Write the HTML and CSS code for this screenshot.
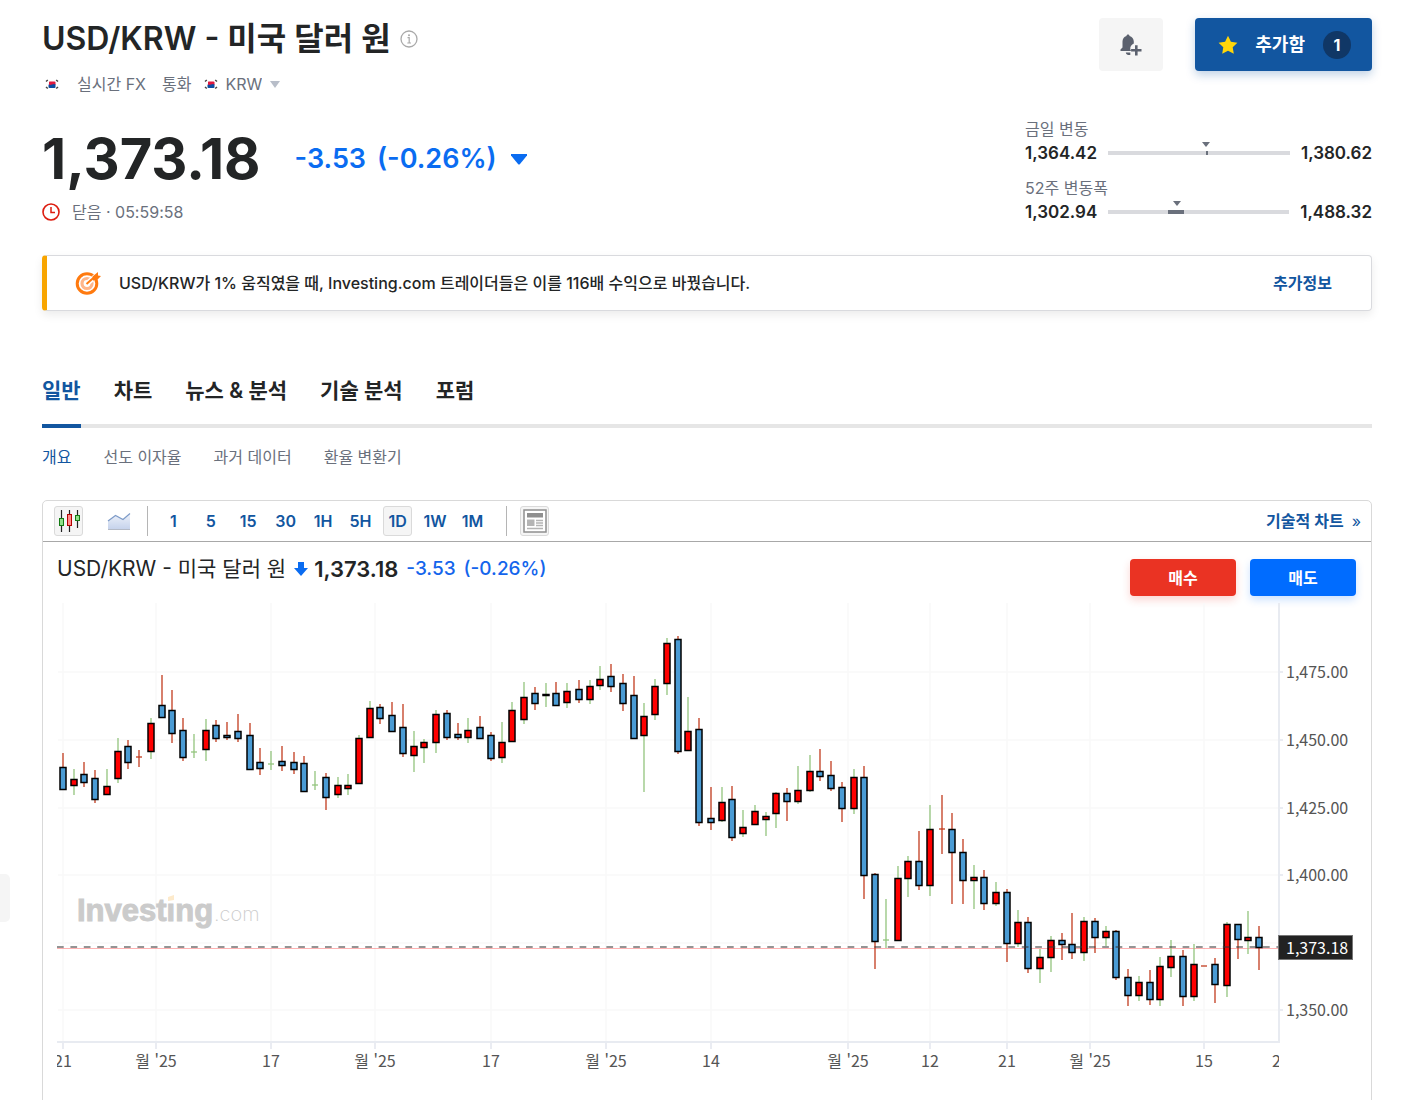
FILE: index.html
```html
<!DOCTYPE html>
<html lang="ko">
<head>
    <meta charset="UTF-8">
    <meta name="viewport" content="width=device-width, initial-scale=1.0">
    <title>USD/KRW - 미국 달러 원</title>
    <link rel="stylesheet" href="styles.css">
</head>
<body>

<svg class="defs" aria-hidden="true">
    <symbol id="flag-kr" viewBox="0 0 14 14">
        <rect width="14" height="14" fill="#fff"/>
        <path d="M4 8V5q0-.5.5-.5H9.500q1 0 1 1V8z" fill="#e0193f"/>
        <path d="M3.500 7.500q1.500.8 3.500 0 2-1 3.500 0V10q0 1-1 1H4.500q-1 0-1-1z" fill="#0b4da2"/>
        <path d="M1 4.500l1.800-1.500M11.200 3l1.800 1.500M1 10l1.800 1.500M11.200 11.500l1.800-1.500" stroke="#444" stroke-width="1.500"/>
    </symbol>
</svg>

<button class="side-tab" aria-label="open panel"></button>

<main class="page">
    <header class="quote">
        <div class="quote-left">
            <h1>USD/KRW - 미국 달러 원
                <svg class="info" viewBox="0 0 18 18"><circle cx="9" cy="9" r="8" fill="none" stroke="#a9a9a9" stroke-width="1.300"/><circle cx="9" cy="5.200" r="1" fill="#a9a9a9"/><path d="M7.500 7.700H9.200V13M7.300 13H11" fill="none" stroke="#a9a9a9" stroke-width="1.200"/></svg>
            </h1>
            <div class="crumbs">
                <svg class="flag"><use href="#flag-kr"/></svg>
                <span class="crumb-fx">실시간 FX</span>
                <label for="currency">통화</label>
                <svg class="flag"><use href="#flag-kr"/></svg>
                <select id="currency"><option>KRW</option></select>
                <svg class="caret" viewBox="0 0 10 7"><path d="M0 0h10L5 7z" fill="#b8bec9"/></svg>
            </div>
            <div class="price-row">
                <span class="price">1,373.18</span>
                <span class="change">-3.53</span>
                <span class="change">(-0.26%)</span>
                <svg class="down" viewBox="0 0 16 11"><path d="M0 0h16v1.500L9 10q-1 1-2 0L0 1.500z" fill="#0a6cf1"/></svg>
            </div>
            <div class="status">
                <svg class="clock" viewBox="0 0 18 18" fill="none" stroke="#dd1c0f"><circle cx="9" cy="9" r="8" stroke-width="1.600"/><path d="M9 4v5.500h4" stroke-width="1.500"/></svg>
                <span>닫음 · 05:59:58</span>
            </div>
        </div>

        <div class="quote-right">
            <div class="actions">
                <button class="alert" aria-label="알림">
                    <svg viewBox="0 0 22 22" fill="#5b616e"><path d="M8 0.500C8.800 0.500 9.500 1 9.500 2C12 2.800 13.800 5 13.800 7.500V9.500C11.500 10.500 10 12.500 10.300 15.200L11 17H0.500V15.500L2.500 13.500V7.500C2.500 5 4 2.800 6.500 2C6.500 1 7.200 0.500 8 0.500zM5.800 18.500H10.300V21C8 21.200 6 20.500 5.800 18.500z"/><path d="M15 11.200h2.600v3.800h3.900v2.600h-3.900v3.900H15v-3.900h-3.900V15H15z"/></svg>
                </button>
                <button class="added">
                    <svg viewBox="0 0 20 20"><path d="M10 .8l2.900 6 6.500.9-4.700 4.600 1.100 6.500L10 15.700l-5.800 3.100 1.100-6.500L.6 7.700l6.500-.9z" fill="#ffd60a"/></svg>
                    <span>추가함</span>
                    <span class="count">1</span>
                </button>
            </div>
            <div class="range">
                <span class="range-label">금일 변동</span>
                <div class="range-row">
                    <b>1,364.42</b>
                    <div class="bar"><i class="fill day"></i><i class="pin day"></i></div>
                    <b>1,380.62</b>
                </div>
            </div>
            <div class="range">
                <span class="range-label">52주 변동폭</span>
                <div class="range-row">
                    <b>1,302.94</b>
                    <div class="bar"><i class="fill year"></i><i class="pin year"></i></div>
                    <b>1,488.32</b>
                </div>
            </div>
        </div>
    </header>

    <section class="promo">
        <svg viewBox="0 0 26 24" fill="none">
            <circle cx="12" cy="12.500" r="9.800" stroke="#ff7a0f" stroke-width="3"/>
            <circle cx="12" cy="12.500" r="5" stroke="#ffb68a" stroke-width="3.200"/>
            <path d="M12 12.500L21 5" stroke="#fff" stroke-width="5"/>
            <path d="M11.500 13L20 5.500" stroke="#ff7a0f" stroke-width="2"/>
            <path d="M17.500 5.500L23 1v3.500l3 .5-4.500 4.500H18z" fill="#ff7a0f"/>
        </svg>
        <p>USD/KRW가 1% 움직였을 때, Investing.com 트레이더들은 이를 116배 수익으로 바꿨습니다.</p>
        <a href="#">추가정보</a>
    </section>

    <nav class="tabs">
        <a href="#" class="active">일반</a>
        <a href="#">차트</a>
        <a href="#">뉴스 &amp; 분석</a>
        <a href="#">기술 분석</a>
        <a href="#">포럼</a>
    </nav>
    <nav class="subtabs">
        <a href="#" class="active">개요</a>
        <a href="#">선도 이자율</a>
        <a href="#">과거 데이터</a>
        <a href="#">환율 변환기</a>
    </nav>

    <section class="chart-box">
        <div class="toolbar">
            <button class="tool active" aria-label="candles">
                <svg viewBox="0 0 24 24"><path d="M4.500 1v22M12.500 1v22M20.500 1v18" stroke="#222" stroke-width="1.200"/><rect x="2.500" y="9.500" width="4" height="7" fill="#8fe08a" stroke="#137a13"/><rect x="10.500" y="5.500" width="4" height="11" fill="#ff8a8a" stroke="#b30000"/><rect x="18.500" y="6.500" width="4" height="5" fill="#8fe08a" stroke="#137a13"/></svg>
            </button>
            <button class="tool area" aria-label="area">
                <svg viewBox="0 0 24 24"><defs><linearGradient id="sky" x2="0" y2="1"><stop stop-color="#eef2fa"/><stop offset="1" stop-color="#c6d3ec"/></linearGradient></defs><path d="M1 12L8.500 6.500L16 10.500L23 4.500V20H1z" fill="url(#sky)"/><path d="M1 12L8.500 6.500L16 10.500L23 4.500" fill="none" stroke="#7d9bc8" stroke-width="1.200"/><path d="M1 20.500H23" stroke="#b4bac6"/></svg>
            </button>
            <span class="sep"></span>
            <div class="frames">
                <button>1</button>
                <button>5</button>
                <button>15</button>
                <button>30</button>
                <button>1H</button>
                <button>5H</button>
                <button class="active">1D</button>
                <button>1W</button>
                <button>1M</button>
            </div>
            <span class="sep"></span>
            <button class="tool active" aria-label="news">
                <svg viewBox="0 0 24 24"><rect x="1" y="1" width="22" height="22" fill="#fff" stroke="#8f8f8f" stroke-width="1.500"/><path d="M4 4h16v4.500H4z" fill="#8f8f8f"/><path d="M4 10.500h7.500v6.500H4z" fill="#b4b4b4"/><path d="M13 11.500h7M13 14h7M13 16.500h7M4 19.500h16" stroke="#b4b4b4" stroke-width="1.300"/></svg>
            </button>
            <a href="#" class="tech">기술적 차트 <span>»</span></a>
        </div>

        <div class="chart-head">
            <span class="name">USD/KRW - 미국 달러 원</span>
            <svg class="arrow" viewBox="0 0 14 14"><path d="M4 0h6v6h4L7 14L0 6h4z" fill="#0a6cf1"/></svg>
            <b>1,373.18</b>
            <span class="diff">-3.53</span>
            <span class="diff">(-0.26%)</span>
            <div class="trade">
                <button class="buy">매수</button>
                <button class="sell">매도</button>
            </div>
        </div>

        <svg id="chart" viewBox="57 600 1300 480">
            <g id="grid"></g>
            <g class="logo">
                <text x="77" y="921" class="logo-name">Investing</text>
                <path d="M167 895h9v7h-9z" fill="#fff"/>
                <path d="M168 897l6-2v5l-6 1z" fill="#fdeacb"/>
                <text x="214" y="921" class="logo-com">.com</text>
            </g>
            <path d="M57 948.500H1278" stroke="#ff0000" stroke-opacity=".3"/>
            <g id="candles"></g>
            <path d="M57 947H1278" stroke="#333" stroke-opacity=".7" stroke-width="1.500" stroke-dasharray="6.700 6.700"/>
            <g id="axis"></g>
            <rect x="1278.500" y="935.500" width="74" height="24" fill="#222" stroke="#777"/>
            <text x="1286" y="954" class="now">1,373.18</text>
        </svg>
    </section>
</main>

<script src="chart.js"></script>
</body>
</html>
```
FILE: styles.css
```css
*{box-sizing:border-box;}
body{margin:0;background:#fff;color:#232526;font-family:Inter,"Noto Sans CJK KR",sans-serif;font-size:16px;line-height:24px;}
button{font:inherit;border:0;padding:0;background:none;cursor:pointer;}
a{color:inherit;text-decoration:none;}
h1,p{margin:0;}
svg{display:block;flex:none;}
.defs{position:absolute;width:0;height:0;}
.page{padding:18px 43px 40px 42px;}
.side-tab{position:fixed;left:0;top:874px;width:10px;height:48px;background:#f5f5f5;border-radius:0 5px 5px 0;}

/* quote header */
.quote{display:flex;justify-content:space-between;}
h1{display:flex;align-items:center;gap:9px;font-size:32px;line-height:42px;font-weight:600;}
.info{width:18px;height:18px;}
.crumbs{display:flex;align-items:center;height:24px;margin-top:12px;color:#6a707c;}
.flag{width:14px;height:14px;margin:0 7px 0 3px;}
.crumb-fx{margin:0 16px 0 11px;}
.crumbs label{margin-right:10px;}
.crumbs select{appearance:none;border:0;padding:0;margin:0;background:none;font:inherit;color:inherit;}
.caret{width:10px;height:7px;margin-left:8px;}
.price-row{display:flex;align-items:center;margin-top:28px;height:70px;}
.price{font-size:56px;line-height:70px;font-weight:700;margin-right:34px;}
.change{font-size:27px;font-weight:600;color:#0a6cf1;margin-right:11px;}
.down{width:16px;height:11px;margin-left:3px;}
.status{display:flex;align-items:center;gap:12px;margin-top:6px;color:#6a707c;}
.clock{width:18px;height:18px;}

.quote-right{width:347px;}
.actions{display:flex;justify-content:flex-end;gap:32px;margin-bottom:46px;}
.alert{display:flex;align-items:center;justify-content:center;width:64px;height:53px;background:#f5f5f5;border-radius:4px;}
.alert svg{width:22px;height:22px;}
.added{display:flex;align-items:center;height:53px;padding:0 21px 0 23px;background:#1256a0;color:#fff;border-radius:4px;font-size:18px;font-weight:700;box-shadow:0 4px 10px #1256a044;}
.added svg{width:20px;height:20px;margin-right:17px;}
.count{width:28px;height:28px;margin-left:18px;border-radius:50%;background:#103766;font-size:16px;line-height:28px;}
.range{margin-bottom:11px;}
.range-label{display:block;color:#6a707c;}
.range-row{display:flex;align-items:center;gap:11px;}
.range-row b{font-size:17px;font-weight:600;}
.bar{position:relative;flex:1;height:4px;background:#d9dade;}
.fill{position:absolute;top:0;height:4px;background:#6a707c;}
.fill.day{left:54%;width:2px;}
.fill.year{left:33%;width:9%;}
.pin{position:absolute;top:-9px;margin-left:-4px;border:4px solid transparent;border-top:5px solid #6a707c;border-bottom:0;}
.pin.day{left:54%;}
.pin.year{left:38%;}

.promo{display:flex;align-items:center;height:56px;margin-top:20px;padding:0 39px 0 28px;border:1px solid #d9dade;border-left:5px solid #f8a500;border-radius:4px;box-shadow:0 4px 10px #00000014;}
.promo svg{width:26px;height:24px;}
.promo p{flex:1;margin-left:18px;font-weight:500;}
.promo a{color:#1256a0;font-weight:600;}

.tabs{display:flex;gap:33px;margin-top:64px;border-bottom:4px solid #e6e6e6;font-size:21px;font-weight:600;}
.tabs a{padding:4px 0 21px;margin-bottom:-4px;border-bottom:4px solid transparent;line-height:24px;}
.tabs a.active{color:#1256a0;border-color:#1256a0;}
.subtabs{display:flex;gap:32px;margin-top:17px;color:#6a707c;}
.subtabs a.active{color:#1256a0;}

/* chart */
.chart-box{margin-top:31px;padding-bottom:40px;border:1px solid #d9d9d9;border-radius:5px;}
.toolbar{display:flex;align-items:center;height:41px;padding:0 10px 0 11px;border-bottom:1px solid #a8a8a8;color:#1256a0;}
.tool{display:flex;align-items:center;justify-content:center;width:29px;height:30px;border:1px solid transparent;border-radius:3px;}
.tool svg{width:24px;height:24px;}
.tool.active,.frames .active{background:#f5f5f5;border:1px solid #dadada;}
.area{margin:0 14px 0 21px;}
.sep{width:1px;height:30px;background:#b5b5b5;}
.frames{display:flex;justify-content:space-between;width:328px;margin:0 19px 0 11px;}
.frames button{width:29px;height:30px;border:1px solid transparent;border-radius:3px;color:#1256a0;font-weight:600;}
.frames + .sep{margin-right:13px;}
.tech{margin-left:auto;font-weight:600;}
.tech span{margin-left:4px;font-weight:400;}
.chart-head{display:flex;align-items:center;height:58px;padding:0 15px 5px 14px;}
.name{font-size:21px;}
.arrow{width:14px;height:14px;margin:0 6px 0 8px;}
.chart-head b{font-size:22px;font-weight:600;margin-right:8px;}
.diff{font-size:19px;font-weight:500;color:#1465ec;margin-right:8px;}
.trade{display:flex;gap:14px;margin:18px 0 0 auto;}
.trade button{width:106px;height:37px;border-radius:4px;color:#fff;font-weight:700;}
.trade .buy{background:#ea3323;box-shadow:0 4px 8px #ea332333;}
.trade .sell{background:#006cff;box-shadow:0 4px 8px #006cff33;}
#chart{width:calc(100% - 28px);margin-left:14px;height:auto;font-family:"Noto Sans CJK KR",sans-serif;font-size:16px;}
#chart text{fill:#555;}
#chart .now{fill:#fff;}
#chart .logo text{fill:#cbcbcb;}
#chart .logo-name{font-family:"Liberation Sans",sans-serif;font-weight:700;font-size:31px;stroke:#cbcbcb;stroke-width:1px;}
#chart .logo-com{font-family:Inter,sans-serif;font-weight:200;font-size:20px;}
```
FILE: chart.js
```javascript
// x, high, body top, body bottom, low, kind (u = up, d = down, + / - = no body)
const candles = [
    [63,753,767,790,790,'d'],[74,769,779,786,795,'u'],[84,762,774,783,787,'d'],[95,770,778,800,803,'d'],
    [107,769,786,795,795,'u'],[118,738,751,779,783,'u'],[128,740,746,763,769,'d'],[139,750,757,757,767,'-'],
    [151,718,723,752,759,'u'],[162,675,705,718,718,'d'],[172,690,710,734,743,'d'],[183,718,730,758,761,'d'],
    [194,734,752,752,758,'+'],[206,719,730,750,761,'u'],[216,720,725,739,742,'d'],[227,722,735,738,740,'d'],
    [238,714,731,739,742,'d'],[250,723,735,770,770,'d'],[260,748,762,769,775,'d'],[271,751,764,764,770,'+'],
    [282,746,761,766,771,'d'],[294,752,762,770,774,'d'],[304,756,763,792,792,'d'],[315,771,785,785,790,'+'],
    [326,773,777,798,810,'d'],[338,777,785,795,798,'u'],[348,774,785,789,795,'u'],[359,735,738,784,784,'u'],
    [370,701,708,738,738,'u'],[380,704,707,719,724,'d'],[392,702,715,732,732,'d'],[403,704,727,754,757,'d'],
    [414,731,746,756,772,'u'],[424,739,742,748,763,'u'],[436,710,714,743,753,'u'],[447,710,713,738,740,'d'],
    [458,723,734,738,740,'d'],[468,718,730,738,743,'u'],[480,716,727,739,739,'d'],[491,732,735,759,761,'d'],
    [502,722,742,758,763,'u'],[512,702,710,742,742,'u'],[524,682,697,720,724,'u'],[535,687,693,704,710,'d'],
    [546,683,694,696,707,'u'],[556,682,693,706,706,'d'],[567,683,691,703,708,'u'],[579,680,689,700,703,'d'],
    [590,680,686,700,704,'u'],[600,666,679,686,690,'u'],[611,664,676,687,692,'d'],[623,674,683,704,711,'d'],
    [634,676,695,739,739,'d'],[644,703,716,736,792,'u'],[655,679,686,715,720,'u'],[667,638,643,684,695,'u'],
    [678,636,639,752,754,'d'],[688,697,731,751,751,'u'],[699,718,729,823,826,'d'],[711,787,818,823,830,'d'],
    [722,787,802,821,822,'u'],[732,786,799,838,841,'d'],[743,810,827,834,837,'u'],[755,805,811,825,825,'u'],
    [766,812,816,820,836,'u'],[776,792,793,814,828,'u'],[787,788,793,802,821,'d'],[798,766,790,802,804,'u'],
    [810,755,771,791,792,'u'],[820,749,771,777,781,'d'],[831,761,775,789,791,'d'],[842,782,787,809,822,'d'],
    [854,769,777,809,814,'u'],[864,766,777,876,899,'d'],[875,873,874,942,969,'d'],[886,899,940,940,948,'+'],
    [898,866,878,941,941,'u'],[908,856,861,879,897,'u'],[919,831,861,886,890,'d'],[930,805,829,886,896,'u'],
    [942,795,829,829,854,'-'],[952,813,829,853,904,'d'],[963,839,852,881,904,'d'],[974,865,877,881,909,'u'],
    [984,870,877,904,910,'d'],[996,882,892,904,906,'u'],[1007,889,892,944,962,'d'],[1018,910,922,944,947,'u'],
    [1028,917,922,969,973,'d'],[1040,949,957,969,983,'u'],[1051,936,940,958,972,'u'],[1062,933,940,945,960,'d'],
    [1072,913,944,953,959,'d'],[1084,917,921,953,961,'u'],[1095,918,921,938,953,'d'],[1106,926,931,938,946,'u'],
    [1116,930,931,978,980,'d'],[1128,969,977,996,1006,'d'],[1139,976,982,996,1001,'u'],[1150,970,982,1000,1005,'d'],
    [1160,957,966,1000,1006,'u'],[1171,940,956,968,977,'u'],[1183,950,956,997,1006,'d'],[1194,944,964,997,1001,'u'],
    [1204,966,966,966,966,'-'],[1215,958,964,985,1003,'d'],[1227,922,924,986,997,'u'],[1238,924,924,940,959,'d'],
    [1248,911,937,941,954,'u'],[1259,926,937,948,970,'d']
];

const dates = [[63,'21'],[156,"월 '25"],[271,'17'],[375,"월 '25"],[491,'17'],[606,"월 '25"],[711,'14'],
    [848,"월 '25"],[930,'12'],[1007,'21'],[1090,"월 '25"],[1204,'15'],[1281,'2']];
const prices = [[672,'1,475.00'],[740,'1,450.00'],[808,'1,425.00'],[875,'1,400.00'],[943,''],[1010,'1,350.00']];

let grid = '', axis = '', bars = '';

dates.forEach(([x, text]) => {
    if (x < 1279) {
        grid += `<path d="M${x} 603V1041" stroke="#f8f8f9" stroke-width="1.500"/>`;
        axis += `<path d="M${x} 1043V1049" stroke="#e3e6ee" stroke-width="1.500"/>`;
        axis += `<text x="${x}" y="1067" text-anchor="middle">${text}</text>`;
    } else {
        axis += `<svg x="1260" y="1050" width="19" height="24"><text x="12" y="17">${text}</text></svg>`;
    }
});
prices.forEach(([y, text]) => {
    grid += `<path d="M58 ${y}H1278" stroke="#f8f8f9" stroke-width="1.500"/>`;
    if (text) {
        axis += `<path d="M1279 ${y}H1283" stroke="#e3e6ee" stroke-width="1.500"/>`;
        axis += `<text x="1286" y="${y + 6}">${text}</text>`;
    }
});
axis += '<path d="M57 1042H1279V603" fill="none" stroke="#e8ebf1" stroke-width="2"/>';

candles.forEach(([x, high, top, bottom, low, kind]) => {
    const up = kind === 'u' || kind === '+';
    const wick = up ? '#93c47d' : '#c23b1e';
    bars += `<path d="M${x} ${high}V${low}" stroke="${wick}" stroke-width="1.300"/>`;
    if (kind === '+' || kind === '-') {
        bars += `<path d="M${x - 3} ${top}H${x + 3}" stroke="${wick}" stroke-width="1.300"/>`;
    } else {
        const h = Math.max(bottom - top - 1, 1);
        bars += `<rect x="${x - 3}" y="${top + 0.5}" width="6" height="${h}" fill="${up ? '#ff0000' : '#4a9bd4'}" stroke="#000" stroke-width="1.500"/>`;
    }
});

document.getElementById('grid').innerHTML = grid;
document.getElementById('axis').innerHTML = axis;
document.getElementById('candles').innerHTML = bars;
```
